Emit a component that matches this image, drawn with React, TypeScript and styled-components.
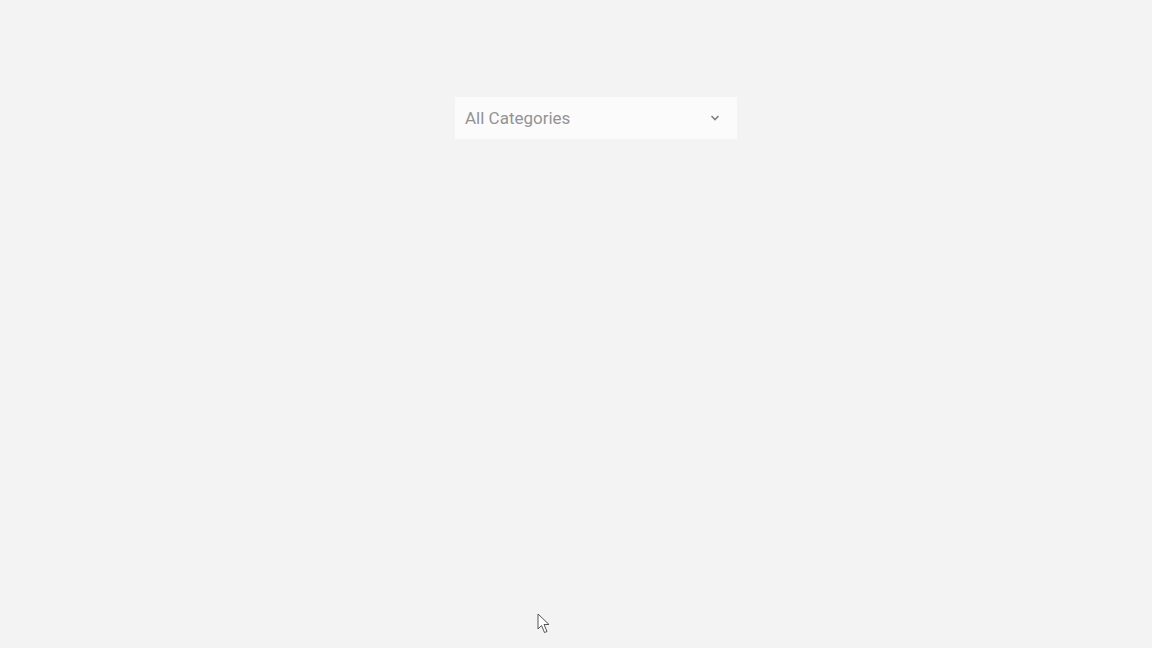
import styled, { createGlobalStyle } from "styled-components";

const GlobalStyle = createGlobalStyle`
  html, body {
    margin: 0;
    padding: 0;
    background: #f3f3f3;
  }
  body {
    font-family: Roboto, "Liberation Sans", sans-serif;
  }
`;

const Page = styled.div`
  position: relative;
  width: 1152px;
  height: 648px;
  overflow: hidden;
  background: #f3f3f3;
  padding: 97px 0 0 455px;
  box-sizing: border-box;
`;

const Select = styled.div`
  display: flex;
  align-items: center;
  justify-content: space-between;
  width: 282px;
  height: 42px;
  box-sizing: border-box;
  padding: 0 17px 0 10px;
  background: #fbfbfb;
  cursor: pointer;
`;

const Label = styled.span`
  font-size: 17px;
  color: #939393;
`;

const Chevron = styled.svg`
  width: 10px;
  height: 10px;
`;

const Pointer = styled.svg`
  position: absolute;
  left: 537px;
  top: 613px;
  width: 14px;
  height: 22px;
`;

export default function App() {
  return (
    <>
      <GlobalStyle />
      <Page>
        <Select>
          <Label>All Categories</Label>
          <Chevron viewBox="0 0 10 10">
            <path d="M1.5 3 L5 6.5 L8.5 3" fill="none" stroke="#808080" strokeWidth="1.6" />
          </Chevron>
        </Select>
        <Pointer viewBox="0 0 14 22">
          <path
            d="M1 1 L1 16 L4.5 12.5 L7.5 19.5 L10 18.5 L7 11.5 L12 11.5 Z"
            fill="#fff"
            stroke="#555"
            strokeWidth="1"
            strokeLinejoin="round"
          />
        </Pointer>
      </Page>
    </>
  );
}
